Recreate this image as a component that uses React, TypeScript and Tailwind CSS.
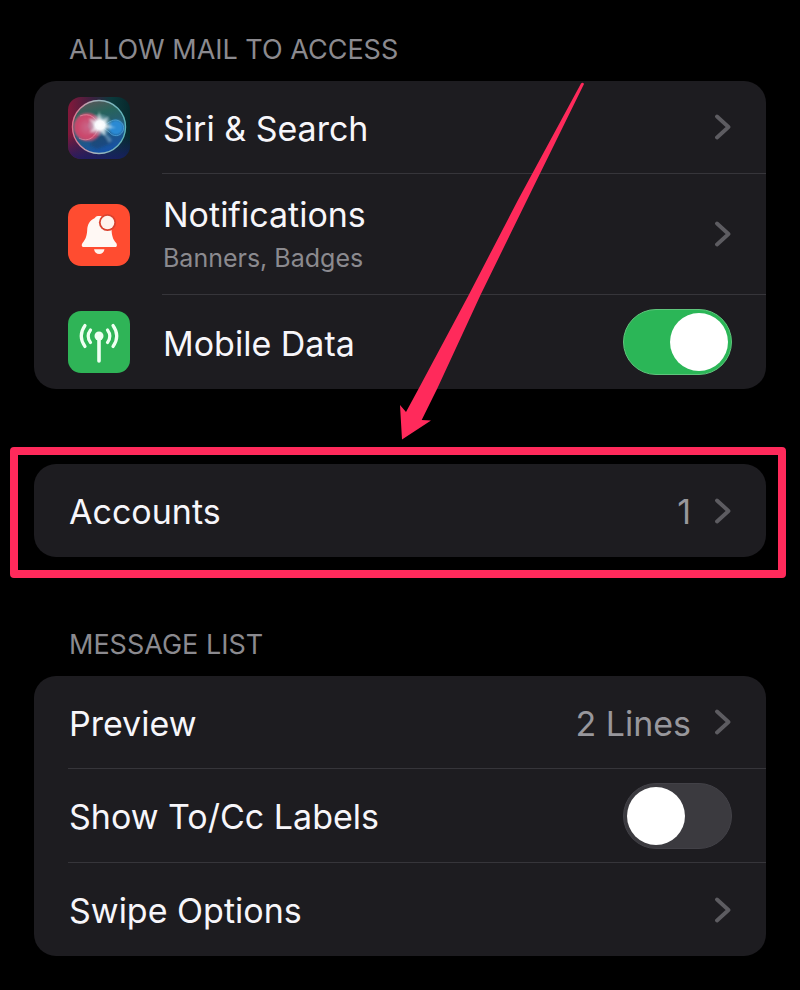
import { useId, useState, type ReactNode } from "react";

function Chevron() {
  return (
    <svg viewBox="0 0 17 26" className="h-[26px] w-[17px] shrink-0" fill="none" aria-hidden="true">
      <path d="M2 2.5 L13.5 13 L2 23.5" stroke="#5d5c61" strokeWidth="3.8" strokeLinecap="round" strokeLinejoin="round" />
    </svg>
  );
}

function SiriIcon() {
  return (
    <svg viewBox="0 0 62 62" className="size-[62px] shrink-0" aria-hidden="true">
      <defs>
        <linearGradient id="siri-bg" x1="0" y1="0" x2="1" y2="0">
          <stop offset="0" stopColor="#84183a" />
          <stop offset="0.4" stopColor="#3a2140" />
          <stop offset="0.7" stopColor="#0b3a3c" />
          <stop offset="1" stopColor="#07282c" />
        </linearGradient>
        <linearGradient id="siri-base" x1="0" y1="0" x2="0" y2="1">
          <stop offset="0.6" stopColor="#16205c" stopOpacity="0" />
          <stop offset="1" stopColor="#1a1c66" stopOpacity="0.85" />
        </linearGradient>
        <linearGradient id="siri-orb" x1="0.2" y1="0" x2="0.5" y2="1">
          <stop offset="0" stopColor="#5e5558" />
          <stop offset="0.3" stopColor="#27645c" />
          <stop offset="0.6" stopColor="#255a78" />
          <stop offset="1" stopColor="#1552a8" />
        </linearGradient>
        <linearGradient id="siri-ring" x1="0" y1="0" x2="1" y2="0">
          <stop offset="0" stopColor="#e0708c" />
          <stop offset="0.4" stopColor="#a9b5bd" />
          <stop offset="1" stopColor="#5bb4ba" />
        </linearGradient>
        <radialGradient id="siri-pink">
          <stop offset="0" stopColor="#c9688a" />
          <stop offset="0.8" stopColor="#cb4468" />
          <stop offset="1" stopColor="#d2587a" stopOpacity="0.8" />
        </radialGradient>
        <radialGradient id="siri-glow">
          <stop offset="0" stopColor="#ffffff" />
          <stop offset="0.35" stopColor="#f4fbff" stopOpacity="0.95" />
          <stop offset="0.6" stopColor="#c4e0ea" stopOpacity="0.5" />
          <stop offset="1" stopColor="#a0d0e0" stopOpacity="0" />
        </radialGradient>
        <filter id="siri-soft" x="-20%" y="-20%" width="140%" height="140%">
          <feGaussianBlur stdDeviation="0.9" />
        </filter>
      </defs>
      <rect width="62" height="62" rx="13" fill="url(#siri-bg)" />
      <rect width="62" height="62" rx="13" fill="url(#siri-base)" />
      <circle cx="31" cy="30" r="26.5" fill="url(#siri-orb)" />
      <g filter="url(#siri-soft)">
        <path d="M30 29 L22 48 L29 52 L44 46 Z" fill="#17395c" opacity="0.4" />
        <path d="M31 29 L41 46 L44 43 Z" fill="#a8cde0" opacity="0.4" />
        <circle cx="19.5" cy="30" r="14" fill="url(#siri-pink)" />
        <circle cx="48" cy="30.5" r="7.5" fill="#2a8ad4" />
      </g>
      <path d="M12 19 C22 15 28 21 31 29 C28 40 20 46 11 41" fill="none" stroke="#f093a8" strokeWidth="0.9" opacity="0.75" />
      <path d="M33 29 C38 29 41 23 48 23 C54 24 57 29 55 34 C52 40 45 40 41 35 Z" fill="none" stroke="#5cb2e8" strokeWidth="0.9" opacity="0.7" />
      <circle cx="31" cy="30" r="26.5" fill="none" stroke="url(#siri-ring)" strokeWidth="1.4" />
      <ellipse cx="32" cy="28" rx="13" ry="12" fill="url(#siri-glow)" />
      <path
        d="M31 14 L34 24 L41 19 L37 27 L48 31 L37 31 L37 39 L31 33 L21 36 L27 29 L20 21 L29 25 Z"
        fill="#fff"
        opacity="0.5"
        filter="url(#siri-soft)"
      />
    </svg>
  );
}

function BellIcon() {
  return (
    <svg viewBox="0 0 62 62" className="size-[62px] shrink-0" aria-hidden="true">
      <rect width="62" height="62" rx="13" fill="#ff4c30" />
      <path
        d="M30 12 C28 12 27.500 13.500 26.500 14.200 C21.500 16.500 19.500 20.500 19.200 26 C18.900 32 17.500 35.500 14.500 39 C13.400 40.500 13.500 43 15 43 H47.500 C49.200 43 49.200 40.500 48.200 39 C45 35.500 43.800 32 43.500 25 L36 13 C34.500 12 32 11.800 30 12 Z"
        fill="#fff8f4"
      />
      <circle cx="39.500" cy="18.500" r="8.600" fill="#d9432f" />
      <circle cx="39.500" cy="18.500" r="6.800" fill="#fff3ec" />
      <path d="M26 45.300 H36.500 C36 48.500 34 50 31.200 50 C28.500 50 26.500 48.500 26 45.300 Z" fill="#fff3ec" />
    </svg>
  );
}

function AntennaIcon() {
  return (
    <svg viewBox="0 0 62 62" className="size-[62px] shrink-0" fill="none" aria-hidden="true">
      <rect width="62" height="62" rx="13" fill="#2fb457" />
      <g stroke="#effff2" strokeWidth="3.2" strokeLinecap="round">
        <path d="M31 27 V50" strokeWidth="3.6" />
        <path d="M22.500 19 C19.500 23 19.500 27.500 22.500 31.500" />
        <path d="M39.500 19 C42.500 23 42.500 27.500 39.500 31.500" />
        <path d="M17 14.500 C12 21.500 12 28.500 17 35.500" />
        <path d="M45 14.500 C50 21.500 50 28.500 45 35.500" />
      </g>
      <circle cx="31" cy="25" r="4.500" fill="#effff2" />
    </svg>
  );
}

function Section({ title, children }: { title: string; children: ReactNode }) {
  return (
    <section>
      <h2 className="mb-[15px] pl-[35px] text-[27px] leading-8 text-[#8b8a8f] uppercase">{title}</h2>
      <Card>{children}</Card>
    </section>
  );
}

function Card({ children }: { children: ReactNode }) {
  return <div className="overflow-hidden rounded-[22px] bg-[#1d1c20]">{children}</div>;
}

type RowProps = {
  title: string;
  subtitle?: string;
  value?: string;
  icon?: ReactNode;
  last?: boolean;
};

function LinkRow({ title, subtitle, value, icon, last }: RowProps) {
  return (
    <a href="#" className="flex items-stretch gap-8 pl-[34px]">
      {icon && <span className="flex items-center">{icon}</span>}
      <span
        className={`flex flex-1 items-center gap-6 pr-[34px] ${subtitle ? "min-h-[121px]" : "min-h-[93px]"} ${
          last ? "" : "border-b border-[#36353a]"
        }`}
      >
        <span className="flex-1 pt-[3px] pl-px">
          <span className="block text-[34px] leading-[44px]">{title}</span>
          {subtitle && <span className="block text-[25px] leading-[42px] text-[#8b8a8f]">{subtitle}</span>}
        </span>
        {value && <span className="pt-[3px] text-[34px] leading-[44px] text-[#98979c]">{value}</span>}
        <Chevron />
      </span>
    </a>
  );
}

function ToggleRow({ title, icon, last, defaultOn = false }: RowProps & { defaultOn?: boolean }) {
  const id = useId();
  const [on, setOn] = useState(defaultOn);

  return (
    <div className="flex items-stretch gap-8 pl-[34px]">
      {icon && <span className="flex items-center">{icon}</span>}
      <div
        className={`flex min-h-[94px] flex-1 items-center pr-[34px] ${last ? "" : "border-b border-[#36353a]"}`}
      >
        <label htmlFor={id} className="flex-1 pt-[3px] pl-px text-[34px] leading-[44px]">
          {title}
        </label>
        <input
          id={id}
          type="checkbox"
          role="switch"
          checked={on}
          onChange={(e) => setOn(e.target.checked)}
          className="flex h-[66px] w-[109px] shrink-0 cursor-pointer appearance-none items-center rounded-full border border-[#424147] bg-[#3b3a3f] px-[3px] before:size-[58px] before:rounded-full before:bg-white checked:justify-end checked:border-[#5fc57c] checked:bg-[#2bb657]"
        />
      </div>
    </div>
  );
}

export default function App() {
  return (
    <main className="relative min-h-screen bg-black px-[34px] pt-[34px] pb-8 font-['Inter','Liberation_Sans',sans-serif] text-[#f7f6fa]">
      <Section title="Allow Mail to Access">
        <LinkRow title="Siri & Search" icon={<SiriIcon />} />
        <LinkRow title="Notifications" subtitle="Banners, Badges" icon={<BellIcon />} />
        <ToggleRow title="Mobile Data" icon={<AntennaIcon />} defaultOn last />
      </Section>

      <div className="relative mt-[75px] mb-[72px]">
        <Card>
          <LinkRow title="Accounts" value="1" last />
        </Card>
        {/* highlight frame */}
        <div className="pointer-events-none absolute -top-[17px] -right-5 -bottom-[21px] -left-6 rounded-sm border-8 border-[#ff2a5b]" />
      </div>

      <Section title="Message List">
        <LinkRow title="Preview" value="2 Lines" />
        <ToggleRow title="Show To/Cc Labels" />
        <LinkRow title="Swipe Options" last />
      </Section>

      {/* pointer down to the Accounts row */}
      <svg
        viewBox="0 0 184 358"
        className="pointer-events-none absolute top-[82px] left-1/2 h-[358px] w-[184px]"
        aria-hidden="true"
      >
        <path
          d="M181 1.5 Q183 0 184 2 L127 118 L80.5 213 L37.5 306 L21.7 338 L31 338.5 L2 357.5 L0 323 L6 330 L19 306 L68.7 213 L118 118 Z"
          fill="#ff2a5b"
        />
      </svg>
    </main>
  );
}
